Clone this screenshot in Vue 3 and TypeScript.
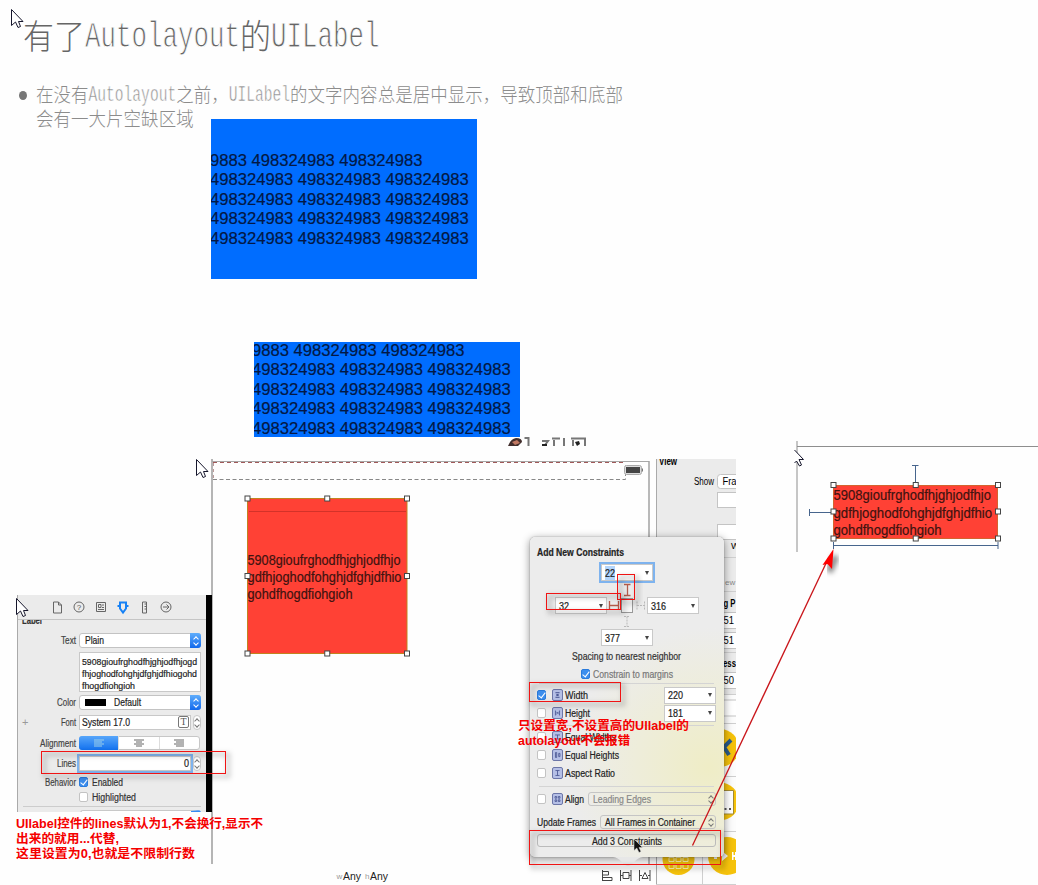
<script setup lang="ts">
import { h } from 'vue'

interface FitProps { t: string; w: number; s?: number }

// One line of real text, fitted to a given width.
const Fit = (p: FitProps) => {
  const s = Number(p.s ?? 10)
  return h('svg', { class: 'fit', width: p.w, height: 14 }, [
    h('text', { x: 0, y: 10.5, 'font-size': s, textLength: p.w, lengthAdjust: 'spacingAndGlyphs' }, p.t),
  ])
}
Fit.props = ['t', 'w', 's']

interface CellProps { t: string; cell: number; cjk: number; sy: number; y: number }

// Half-width / full-width cell typesetting: Latin takes one cell, CJK takes two.
const Cells = (p: CellProps) => {
  let at = 0
  const runs: { t: string; x: number; n: number; latin: boolean }[] = []
  for (const c of p.t) {
    const latin = c.charCodeAt(0) < 256
    const n = latin ? 1 : 2
    const last = runs[runs.length - 1]
    if (last && last.latin === latin) {
      last.t += c
      last.n += n
    } else {
      runs.push({ t: c, x: at * p.cell, n, latin })
    }
    at += n
  }
  return h('svg', { class: 'cells', width: at * p.cell + 4, height: p.y * 1.25 }, runs.map(r =>
    h('text', {
      class: r.latin ? 'thin' : 'wide',
      'font-size': r.latin ? p.cell / 0.6 : p.cjk,
      'stroke-width': p.cell * 0.045,
      transform: `translate(${r.x} ${r.latin ? p.y * 0.95 : p.y}) scale(1 ${r.latin ? 1.45 : p.sy})`,
      textLength: r.n * p.cell,
    }, r.t)))
}
Cells.props = ['t', 'cell', 'cjk', 'sy', 'y']

const nums = '498324983 498324983 498324983'
const numLines = ['9883 498324983 498324983', nums, nums, nums, nums]
const labelLines = [
  { t: '5908gioufrghodfhjghjodfhjo', w: 153 },
  { t: 'gdfhjoghodfohghjdfghjdfhio', w: 154 },
  { t: 'gohdfhogdfiohgioh', w: 105 },
]
const handles = (x0: number, y0: number, x1: number, y1: number, my: number) => {
  const mx = (x0 + x1) / 2
  return [[x0, y0], [mx, y0], [x1, y0], [x0, my], [x1, my], [x0, y1], [mx, y1], [x1, y1]]
}
const bigHandles = handles(247.5, 498.5, 407, 653.5, 576)
const smallHandles = handles(833.5, 485, 998, 538.5, 511.5)
const cursors = [[11, 9], [196, 459], [16, 598]]
const checks = [
  { t: 'Width', w: 23, v: '220', on: true, g: 'M3 2.5h5M3 8.5h5M5.5 4v3M3.5 4l2 1.5 2-1.5M3.5 7l2-1.5 2 1.5' },
  { t: 'Height', w: 25, v: '181', on: false, g: 'M3 2.5v6M8 2.5v6M4 4l1.5 1.5L4 7M7 4L5.5 5.5 7 7' },
]
const equals = [
  { t: 'Equal Widths', w: 51, g: 'M2.5 3h6M2.5 8h6M5.5 3v5' },
  { t: 'Equal Heights', w: 54, g: 'M3 2.5h1.5v6H3zM7 3.5h1.5v4H7z' },
  { t: 'Aspect Ratio', w: 50, g: 'M3 2.5h5M3 8.5h5M5.5 2.5v6' },
]
const frames = [
  { x: 617.5, y: 574.5, w: 17, h: 25 }, { x: 546.5, y: 593.5, w: 74, h: 16 },
  { x: 529.5, y: 682.5, w: 91, h: 19 }, { x: 529.5, y: 830.5, w: 191, h: 34 },
  { x: 41.5, y: 751.5, w: 184, h: 22 },
]
const notes = [
  { t: '只设置宽,不设置高的UIlabel的', x: 518, y: 729.5, w: 171 },
  { t: 'autolayout不会报错', x: 518, y: 745, w: 112 },
  { t: 'UIlabel控件的lines默认为1,不会换行,显示不', x: 16, y: 827.5, w: 247 },
  { t: '出来的就用...代替,', x: 16, y: 843, w: 103 },
  { t: '这里设置为0,也就是不限制行数', x: 16, y: 858, w: 179 },
]
const sideFields = [
  { t: '51', y: 612 }, { t: '51', y: 632 }, { t: '50', y: 672 },
]
</script>

<template>
  <div class="page">
    <header class="slide">
      <h1><Cells t="有了Autolayout的UILabel" :cell="15.5" :cjk="31" :sy="1.1" :y="34.5" /></h1>
      <div class="bullet">
        <i class="dot"></i>
        <p>
          <Cells t="在没有Autolayout之前，UILabel的文字内容总是居中显示，导致顶部和底部" :cell="8.76" :cjk="17.5" :sy="1.12" :y="19" />
          <Cells t="会有一大片空缺区域" :cell="8.76" :cjk="17.5" :sy="1.12" :y="19" />
        </p>
      </div>
    </header>

    <div class="blue first"><div v-for="(l, i) in numLines" :key="i">{{ l }}</div></div>
    <div class="blue second"><div v-for="(l, i) in numLines" :key="i">{{ l }}</div></div>

    <!-- Interface builder canvas -->
    <svg class="layer" width="1038" height="885">
      <g fill="none">
        <path d="M212 459V864" stroke="#b5b5b5" stroke-width="2" />
        <path d="M212 461.5H649" stroke="#a8a8a8" />
        <path d="M213 462.5H626" stroke="#a05858" stroke-dasharray="4 3" />
        <path d="M213 479.5H625.5V463" stroke="#888" stroke-dasharray="4 2.5" />
        <path d="M213.5 463V479" stroke="#b99" stroke-dasharray="3 3" />
        <path d="M649 461V864" stroke="#a2a2a2" stroke-width="1.5" />
      </g>
      <rect x="624.5" y="465.5" width="17" height="9" rx="2" fill="#ddd" stroke="#aaa" />
      <rect x="626" y="467" width="14" height="6" fill="#454545" />
      <path d="M642.5 468.5v3" stroke="#777" />
      <rect x="247.5" y="498.5" width="159.5" height="155" fill="#ff4135" stroke="#c1831f" />
      <path d="M249 511.5H406" stroke="#d33229" />
      <g class="label" font-size="14">
        <text v-for="(l, i) in labelLines" :key="i" x="247.5" :y="564.5 + i * 17.3" :textLength="l.w" lengthAdjust="spacingAndGlyphs">{{ l.t }}</text>
      </g>
      <!-- clipped heading and avatar -->
      <path d="M509 444q2-5 7-6q6 0 6 4l-4 4h-10z" fill="#422e2c" />
      <path d="M512 442l5-2 3 3-5 2z" fill="#c17862" />
      <g fill="none" stroke="#777" stroke-width="2">
        <path d="M524.5 438h4v8M542 441h6l-3 4M552 438.5h8M554 440v6M564 438v8M571 438.5h14v7.5M573 440v6" />
      </g>
      <path d="M575 442l4-1 1 3-3 2zM542 444h5v2h-5z" fill="#222" />
      <text x="336.5" y="879" font-size="8" fill="#999">w</text>
      <text x="343" y="879.5" font-size="10.5" textLength="18" lengthAdjust="spacingAndGlyphs" fill="#222">Any</text>
      <text x="365" y="879" font-size="8" fill="#999">h</text>
      <text x="370" y="879.5" font-size="10.5" textLength="18" lengthAdjust="spacingAndGlyphs" fill="#222">Any</text>
      <path d="M602.5 870v11M602.5 871.5h6v3.5h-6M602.5 877.5h9.5v3h-10M620.5 870v11M631 870v11M623 872.5h6v6h-6zM620 875.5h3M629 875.5h2M639.5 870v11M650 870v11M642 878.5l3-6 3 6zM639 875.5h3M648 875.5h2" fill="none" stroke="#444" />
    </svg>

    <!-- Size inspector behind the popover -->
    <div class="side">
      <svg width="80" height="426" viewBox="656 459 80 426">
        <path d="M656 694h80v191h-80z" fill="#fcfcfc" />
        <path d="M656.5 459V885" stroke="#aaa" />
        <text x="659" y="464.5" font-size="10" font-weight="bold" textLength="18" lengthAdjust="spacingAndGlyphs">View</text>
        <text x="694" y="485" font-size="10" textLength="20" lengthAdjust="spacingAndGlyphs">Show</text>
        <g fill="#fff" stroke="#c4c4c4">
          <rect x="717.5" y="474.5" width="30" height="14" rx="3" />
          <rect x="717.5" y="492.5" width="30" height="15" />
          <rect x="717.5" y="524.5" width="30" height="15" />
          <rect v-for="f in sideFields" :key="f.y" x="710.5" :y="f.y + .5" width="40" height="16" />
          <rect x="710" y="700" width="40" height="16" rx="3" />
        </g>
        <text x="722.5" y="485" font-size="10" textLength="14" lengthAdjust="spacingAndGlyphs">Fra</text>
        <text x="731" y="549" font-size="9">W</text>
        <text x="725" y="584.5" font-size="8" fill="#888">ew</text>
        <text x="723.5" y="606.5" font-size="10" font-weight="bold" textLength="12" lengthAdjust="spacingAndGlyphs">g P</text>
        <text x="723" y="667" font-size="10" font-weight="bold" textLength="13" lengthAdjust="spacingAndGlyphs">ess</text>
        <text v-for="f in sideFields" :key="f.y" x="723.5" :y="f.y + 12" font-size="10" textLength="10.5" lengthAdjust="spacingAndGlyphs">{{ f.t }}</text>
        <path d="M656 557.5h80M656 591.5h80M656 652.5h80M656 694.5h80M656 723.5h80M656 776.5h80M656 831.5h80M702.5 831V885M656 884.5h80" stroke="#cfcfcf" fill="none" />
        <g fill="#f5c20b">
          <circle cx="720" cy="748" r="19" /><circle cx="720" cy="801.5" r="19" />
          <circle cx="678.5" cy="859" r="16" /><circle cx="727" cy="856" r="19" />
        </g>
        <path d="M731 740l-7 7 5 8" fill="none" stroke="#285a88" stroke-width="4" />
        <path d="M715 790.5h18.5v23.5h-18.5z" fill="#fff" stroke="#a28a35" />
        <path d="M724.5 809h2M729 809h2" stroke="#555" stroke-width="2" />
        <path d="M669 857.5h5v4h-5zM676 857.5h5v4h-5zM683 857.5h5v4h-5zM669 864.5h5v4h-5zM676 864.5h5v4h-5zM683 864.5h5v4h-5z" fill="none" stroke="#fff2ae" />
        <path d="M722 851l6 5-6 5zM732 852h1.5v3h1.5v-3h1v8h-1v-3h-1.5v3h-1.5zM714 854h3v5h-3z" fill="#fff" />
      </svg>
    </div>

    <section class="popover">
      <div class="title"><Fit t="Add New Constraints" :w="87" /></div>
      <div class="pins">
        <span class="combo top focus"><mark><Fit t="22" :w="10" /></mark></span>
        <span class="combo left"><Fit t="32" :w="10" /></span>
        <svg class="struts" width="38" height="46" viewBox="608 583 38 46" fill="none">
          <path d="M609.5 601v8M618.5 601v8M609.5 605.5h9M624 584.5h6.5M627.5 584.5v11M624 595.5h6.5" stroke="#b45b4a" stroke-width="1.3" />
          <path d="M637 601.5v8M644.5 601.5v8M637 605.5h8M624 616.5h6M627 616.5v10M624 626.5h6" stroke="#b9b9b9" stroke-dasharray="2 1" />
          <rect x="621.5" y="598.5" width="11" height="14" fill="#f8f8f8" stroke="#999" />
        </svg>
        <span class="combo right"><Fit t="316" :w="15" /></span>
        <span class="combo bottom"><Fit t="377" :w="15" /></span>
      </div>
      <div class="center"><Fit t="Spacing to nearest neighbor" :w="109" /></div>
      <div class="center muted"><i class="check on"></i><Fit t="Constrain to margins" :w="80" /></div>
      <hr />
      <div v-for="c in checks" :key="c.t" class="row">
        <i class="check" :class="{ on: c.on }"></i>
        <svg class="glyph" width="11" height="12" viewBox="0 0 11 11"><path :d="c.g" /></svg>
        <Fit :t="c.t" :w="c.w" />
        <span class="combo end"><Fit :t="c.v" :w="15" /></span>
      </div>
      <hr class="after" />
      <div v-for="c in equals" :key="c.t" class="row">
        <i class="check"></i>
        <svg class="glyph" width="11" height="12" viewBox="0 0 11 11"><path :d="c.g" /></svg>
        <Fit :t="c.t" :w="c.w" />
      </div>
      <hr class="low" />
      <div class="row align">
        <i class="check"></i>
        <svg class="glyph" width="11" height="12" viewBox="0 0 11 11"><path d="M2.5 2.5h2v2h-2zM6.5 2.5h2v2h-2zM2.5 6.5h2v2h-2zM6.5 6.5h2v2h-2z" /></svg>
        <Fit t="Align" :w="19" />
        <span class="select dim"><Fit t="Leading Edges" :w="58" /></span>
      </div>
      <div class="row update"><Fit t="Update Frames" :w="59" /><span class="select"><Fit t="All Frames in Container" :w="90" /></span></div>
      <div class="button"><Fit t="Add 3 Constraints" :w="70" /></div>
      <svg class="tail" width="30" height="11"><path d="M0 0C7 0 10 9 15 9S23 0 30 0z" /></svg>
    </section>

    <!-- Attributes inspector -->
    <section class="attrs">
      <svg class="tabs" width="189" height="25" viewBox="17 595 189 25" fill="none" stroke="#666">
        <path d="M53.5 602h5l3 3v8h-8zM58.5 602v3h3M96.5 602.5h9v9h-9zM98.5 604.5h2.5v3h-2.5zM102 605h2M102 607.5h2M98 609.5h6M142.5 602h4v11h-4zM144.5 604h2M144.5 606.5h2M144.5 609h2" />
        <circle cx="79" cy="607" r="5" /><circle cx="166" cy="607" r="5" />
        <path d="M163 607h6M166.5 604.5l2.5 2.5-2.5 2.5" />
        <text x="76.8" y="610" font-size="8" fill="#555" stroke="none">?</text>
        <path d="M120 602.5h6v6l-3 4-3-4zM117.5 606h3M125.5 606h3" stroke="#1681f5" stroke-width="2" />
      </svg>
      <div class="cut"><div><Fit t="Label" :w="20" /></div></div>
      <div class="prop text"><label><Fit t="Text" :w="15" /></label><span class="pop"><Fit t="Plain" :w="19" /><b></b></span></div>
      <div class="prop area"><label></label><span class="memo">
        <Fit t="5908gioufrghodfhjghjodfhjogd" :w="115" :s="9.5" /><Fit t="fhjoghodfohghjdfghjdfhiogohd" :w="115" :s="9.5" /><Fit t="fhogdfiohgioh" :w="53" :s="9.5" />
      </span></div>
      <div class="prop color"><label><Fit t="Color" :w="19" /></label><span class="pop"><i class="swatch"></i><Fit t="Default" :w="27" /><b></b></span></div>
      <div class="prop font"><em>+</em><label><Fit t="Font" :w="15" /></label><span class="field"><Fit t="System 17.0" :w="48" /><i class="face">T</i></span><i class="stepper"></i></div>
      <div class="prop alignment"><label><Fit t="Alignment" :w="36" /></label>
        <span class="seg">
          <i class="active"><svg width="12" height="8"><path d="M1 1h10M1 3h8M1 5h10M1 7h8" /></svg></i>
          <i><svg width="12" height="8"><path d="M1 1h10M3 3h6M1 5h10M3 7h6" /></svg></i>
          <i><svg width="12" height="8"><path d="M1 1h10M3 3h8M1 5h10M3 7h8" /></svg></i>
        </span>
      </div>
      <div class="prop lines"><label><Fit t="Lines" :w="19" /></label><span class="field focus"><Fit t="0" :w="5" /></span><i class="stepper"></i></div>
      <div class="prop behavior"><label><Fit t="Behavior" :w="31" /></label><i class="check on"></i><Fit t="Enabled" :w="31" /></div>
      <div class="prop high"><label></label><i class="check"></i><Fit t="Highlighted" :w="44" /></div>
      <div class="foot"><i></i></div>
    </section>

    <!-- Second canvas and annotations -->
    <svg class="layer" width="1038" height="885">
      <defs>
        <filter id="soft" x="-20%" y="-60%" width="150%" height="240%"><feGaussianBlur stdDeviation="2.5" /></filter>
      </defs>
      <path d="M797 441V552M797 446.5H1038" stroke="#8e8e8e" fill="none" />
      <rect x="833.5" y="485.5" width="164" height="53" fill="#ff4135" stroke="#d3642f" />
      <g class="label" font-size="14.5">
        <text v-for="(l, i) in labelLines" :key="i" x="833.5" :y="500 + i * 17.7" :textLength="l.w + (i < 2 ? 4.5 : 3)" lengthAdjust="spacingAndGlyphs">{{ l.t }}</text>
      </g>
      <path d="M912 465.5h6.5M915.5 465.5V485M809.5 509v7M809.5 512.5H833M833.5 542v7M998 542v7M833.5 545.5H998" fill="none" stroke="#47658d" />
      <g fill="#fff" stroke="#454545">
        <rect v-for="(p, i) in bigHandles" :key="'b' + i" :x="p[0] - 2.5" :y="p[1] - 2.5" width="5" height="5" />
        <rect v-for="(p, i) in smallHandles" :key="'s' + i" :x="p[0] - 2.5" :y="p[1] - 2.5" width="5" height="5" />
      </g>
      <g fill="#fff" stroke="#16162c">
        <path v-for="(c, i) in cursors" :key="i" :transform="`translate(${c[0]} ${c[1]})`" d="M.5 .5V16.5L4.5 13L7 18.5L9.5 17.5L7.5 12.5H12z" />
        <path d="M794.5 450l9 9.5h-4.5l2.5 5.5-2 1-3-5-2 2" />
      </g>
      <g v-for="f in frames" :key="f.y" fill="none">
        <rect :x="f.x + 3" :y="f.y + 3" :width="f.w" :height="f.h" stroke="#000" stroke-opacity=".17" stroke-width="4" filter="url(#soft)" />
        <rect :x="f.x" :y="f.y" :width="f.w" :height="f.h" stroke="#f01414" />
      </g>
      <path d="M836 556L829 572" stroke="#000" stroke-opacity=".45" stroke-width="7" filter="url(#soft)" />
      <path d="M692.5 845.5L829 557" stroke="#c9151a" stroke-width="1.3" />
      <path d="M833.5 549L822.5 565L827.5 564L832 569z" fill="#f00" />
      <path d="M634 839V850.5L636.8 848L639 852.5L641 851.5L639 847.5H642.5z" fill="#111" stroke="#ddd" stroke-width=".5" />
      <g class="notes">
        <text v-for="n in notes" :key="n.t" :x="n.x" :y="n.y" :textLength="n.w" lengthAdjust="spacingAndGlyphs">{{ n.t }}</text>
      </g>
    </svg>
  </div>
</template>

<style>
body { margin: 0; background: #fefefe; }
.fit { display: block; flex: none; overflow: visible; fill: currentColor; stroke: currentColor; stroke-width: .2px; }
.cells { display: block; overflow: visible; fill: currentColor; }
.cells .wide { font-family: "Noto Sans CJK SC", sans-serif; font-weight: 300; }
.cells .thin { font-family: "Liberation Mono", monospace; stroke: #fefefe; }
</style>

<style scoped>
.page { position: relative; width: 1038px; height: 885px; overflow: hidden; background: #fefefe; font-family: "Liberation Sans", "Noto Sans CJK SC", sans-serif; color: #333; }
.page * { box-sizing: border-box; }
.layer { position: absolute; left: 0; top: 0; }
.label { fill: #401310; stroke: #401310; stroke-width: .2px; }
.slide { padding: 14px 0 0 23px; }
h1 { margin: 0; height: 69px; color: #666; font-weight: 400; }
.bullet { display: flex; margin-left: -4px; color: #8c8c8c; }
.dot { width: 8px; height: 9px; border-radius: 50%; background: #777; margin: 8px 9px 0 0; }
.bullet p { margin: 0; }
.blue { position: absolute; width: 266px; overflow: hidden; background: #006dff; color: #031844; font-size: 16.63px; line-height: 19.45px; white-space: nowrap; -webkit-text-stroke: .2px #031844; }
.first { left: 211px; top: 119px; height: 160px; padding-top: 32px; text-indent: -1px; }
.second { left: 254px; top: 342px; height: 95px; text-indent: -2px; }
.second div:first-child { margin-top: -1px; }
.side { position: absolute; left: 656px; top: 459px; width: 80px; height: 426px; background: #ebebeb; }
.popover { position: absolute; left: 530px; top: 537px; width: 194px; height: 320px; border-radius: 5px; background: radial-gradient(circle at 92% 72%, #efedc6 0, #eeedda 25%, #ececec 48%); box-shadow: 0 2px 9px rgba(0,0,0,.45), 0 0 1px #666; padding: 8px 8px 0 7px; }
.title { height: 16px; font-weight: 700; color: #222; }
.pins { display: grid; grid-template-areas: "a a a" "l s r" "b b b"; grid-template-columns: 70px 38px 1fr; grid-template-rows: 19px 46px 18px; height: 84px; margin-top: 3px; }
.combo { display: flex; align-items: center; position: relative; width: 52px; height: 17px; padding-left: 3px; border: 1px solid #c9c9c9; background: #fff; color: #222; }
.combo::after { content: ""; margin-left: auto; margin-right: 3px; border: 2.5px solid transparent; border-top: 4px solid #444; border-bottom: 0; }
.top { grid-area: a; margin-left: 64px; }
.focus { box-shadow: 0 0 0 2px #7eb3ee; }
mark { background: #b3d5fb; color: #222; }
.left { grid-area: l; margin: 14px 0 0 18px; }
.struts { grid-area: s; margin-left: 1px; }
.right { grid-area: r; margin: 14px 0 0 2px; }
.bottom { grid-area: b; margin-left: 64px; }
.center { display: flex; justify-content: center; align-items: center; gap: 3px; height: 18px; margin-top: -1px; }
.center + .center { margin-top: 0; }
.muted { color: #777; }
.check { flex: none; width: 9px; height: 10px; border: 1px solid #c3c3c3; border-radius: 2px; background: #fff; }
.check.on { background: #3c8eee; border-color: #2a7bdc; position: relative; }
.check.on::after { content: ""; position: absolute; left: 2px; top: 0; width: 3px; height: 6px; border: solid #fff; border-width: 0 1px 1px 0; transform: rotate(38deg); }
hr { margin: 0; border: 0; border-top: 1px solid #d4d4d4; height: 0; }
.pins ~ hr { margin: 0 2px 2px; }
.row { display: flex; align-items: center; height: 18px; color: #222; }
.row .glyph { margin: 0 2px 0 6px; flex: none; }
.glyph { border-radius: 2px; background: #b5bfe6; border: 1px solid #6c76a8; }
.glyph path { fill: none; stroke: #46528f; stroke-width: 1; }
.end { margin-left: auto; }
.pins ~ hr.after { margin: 3px 2px 2px; }
.pins ~ hr.low { margin: 4px 2px 3px; }
.select { position: relative; display: flex; align-items: center; height: 14px; margin-left: 4px; padding-left: 4px; flex: 1; border: 1px solid #c5c5c5; border-radius: 3px; }
.select::after, .stepper::after { content: ""; position: absolute; right: 2px; bottom: 2px; width: 3px; height: 3px; border: solid #777; border-width: 0 1px 1px 0; transform: rotate(45deg); }
.select::before, .stepper::before { content: ""; position: absolute; right: 2px; top: 3px; width: 3px; height: 3px; border: solid #777; border-width: 1px 0 0 1px; transform: rotate(45deg); }
.dim { color: #888; }
.update { margin-top: 5px; }
.button { display: flex; justify-content: center; align-items: center; height: 13px; margin-top: 3px; border: 1px solid #bbb; border-radius: 3px; color: #222; }
.tail { position: absolute; left: 83px; top: 320px; fill: #e7e7e7; }
.attrs { position: absolute; left: 17px; top: 595px; width: 195px; height: 217px; overflow: hidden; background: #ebebeb; border-left: 1px solid #aaa; border-right: 6px solid #000; }
.tabs { display: block; box-shadow: inset 0 -1px #c5c5c5; margin-left: -1px; }
.cut { height: 9px; overflow: hidden; padding-left: 4px; font-weight: 700; }
.cut div { margin-top: -7px; }
.prop { display: flex; align-items: center; height: 16px; position: relative; }
.prop label { width: 58px; margin-right: 3px; display: flex; justify-content: flex-end; color: #444; flex: none; }
.text { margin-top: 3px; }
.area { margin-top: 3px; height: 42px; }
.color { margin-top: 1px; }
.font { margin-top: 4px; }
.alignment { margin-top: 5px; }
.lines { margin-top: 4px; }
.behavior { margin-top: 3px; height: 15px; }
.high { height: 15px; }
.pop { display: flex; align-items: center; position: relative; width: 122px; height: 15px; padding-left: 5px; border: 1px solid #c3c3c3; border-radius: 3px; background: #fff; color: #222; }
.pop b { position: absolute; right: -1px; top: -1px; width: 11px; height: 15px; border-radius: 0 3px 3px 0; background: linear-gradient(#5fadfc, #1269ec); }
.pop b::before, .pop b::after { content: ""; position: absolute; left: 4px; width: 3px; height: 3px; border: solid #fff; border-width: 1px 0 0 1px; transform: rotate(45deg); top: 4px; }
.pop b::after { transform: rotate(225deg); top: 8px; }
.memo { width: 122px; height: 40px; padding: 1px 0 0 2px; background: #fff; border: 1px solid #c8c8c8; color: #222; }
.memo .fit { height: 12px; }
.swatch { width: 21px; height: 7px; background: #000; margin-right: 8px; }
.font em { position: absolute; left: 4px; font: 11px "Liberation Sans", sans-serif; color: #999; }
.field { display: flex; align-items: center; justify-content: space-between; width: 112px; height: 15px; padding: 0 1px 0 2px; background: #fff; border: 1px solid #c8c8c8; color: #222; }
.face { width: 11px; height: 12px; border: 1px solid #777; border-radius: 2px; font: 10px/10px "Liberation Serif", serif; text-align: center; color: #555; }
.stepper { position: relative; width: 8px; height: 15px; margin-left: 2px; border: 1px solid #c8c8c8; border-radius: 4px; background: #fff; }
.stepper::before, .stepper::after { right: 1.5px; }
.lines .field { justify-content: flex-end; }
.seg { display: flex; width: 121px; height: 14px; border: 1px solid #c7c7c7; border-radius: 3px; background: #fff; }
.seg i { flex: 1; display: flex; align-items: center; justify-content: center; border-right: 1px solid #ddd; }
.seg i:last-child { border: 0; }
.seg path { stroke: #666; fill: none; }
.seg .active { background: linear-gradient(#57a6fa, #1271ef); margin: -1px 0 -1px -1px; border-radius: 3px 0 0 3px; }
.seg .active path { stroke: #9ed0e8; }
.prop .check { margin-right: 4px; }
.foot { margin: 2px 5px 0; border-top: 1px solid #ccc; display: flex; justify-content: flex-end; }
.foot i { width: 121px; height: 8px; margin: 3px 0 0; border: 1px solid #c8c8c8; border-right: 10px solid #338bf5; border-radius: 3px 3px 0 0; background: #fff; }
.notes { fill: #f50000; font: bold 12.3px "Liberation Sans", "Noto Sans CJK SC", sans-serif; }
</style>
